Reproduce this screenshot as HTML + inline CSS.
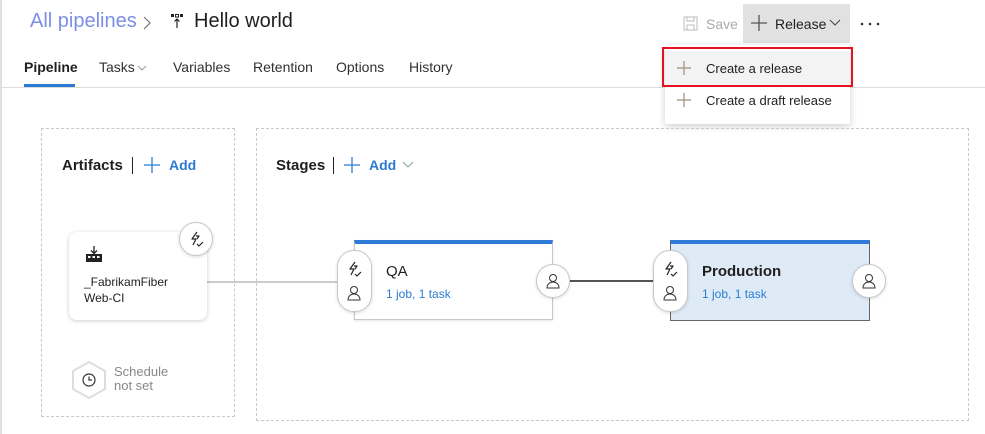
<!DOCTYPE html>
<html><head><meta charset="utf-8"><style>
*{box-sizing:border-box;margin:0;padding:0}
body{width:985px;height:434px;background:#fff;font-family:"Liberation Sans",sans-serif;position:relative;overflow:hidden;color:#201f1e}
.a{position:absolute}
.tab{position:absolute;top:59px;font-size:14px;color:#323130}
.circ{position:absolute;width:34px;height:34px;border-radius:50%;background:#fff;border:1px solid #c8c8c8;box-shadow:0 1px 3px rgba(0,0,0,.15);display:flex;align-items:center;justify-content:center}
.pill{position:absolute;width:35px;height:62px;border-radius:17px;background:#fff;border:1px solid #c8c8c8;box-shadow:0 1px 3px rgba(0,0,0,.15)}
</style></head><body>
<svg width="0" height="0" style="position:absolute"><defs>
<symbol id="bolt" viewBox="0 0 16 16"><path d="M9 1L4 8h4l-3 6M9 8l2-3h-3M9 13l2 2 4-4" fill="none" stroke="#222" stroke-width="1.2" stroke-linejoin="round"/></symbol>
<symbol id="user" viewBox="0 0 14 16"><circle cx="7" cy="5" r="3.5" fill="none" stroke="#333"/><path d="M1 15c0-4 3-6 6-6s6 2 6 6z" fill="none" stroke="#333"/></symbol>
</defs></svg>
<div class="a" style="left:0;top:0;width:2px;height:434px;background:#e0e0e0"></div>
<div class="a" style="left:30px;top:10px;font-size:20px;color:#7a8fe6">All pipelines</div>
<svg class="a" style="left:143px;top:16px" width="8" height="14"><path d="M1 1l6 6-6 6" stroke="#777" fill="none" stroke-width="1.2"/></svg>
<svg class="a" style="left:170px;top:13px" width="16" height="16" viewBox="0 0 16 16"><rect x="1" y="1" width="3" height="3" fill="#222"/><rect x="5.5" y="1.5" width="3" height="2.5" fill="none" stroke="#222"/><rect x="10" y="1" width="3" height="3" fill="#222"/><path d="M7 15V6M4.5 8.5L7 6l2.5 2.5" stroke="#222" fill="none" stroke-width="1.2"/></svg>
<div class="a" style="left:194px;top:10px;font-size:20px;color:#201f1e">Hello world</div>
<div class="tab" style="left:24px;font-weight:bold;color:#201f1e">Pipeline</div>
<div class="a" style="left:24px;top:84px;width:51px;height:3px;background:#2b7bd3"></div>
<div class="tab" style="left:99px">Tasks</div>
<svg class="a" style="left:137px;top:65px" width="10" height="6"><path d="M1 1l4 4 4-4" stroke="#999" fill="none"/></svg>
<div class="tab" style="left:173px">Variables</div>
<div class="tab" style="left:253px">Retention</div>
<div class="tab" style="left:336px">Options</div>
<div class="tab" style="left:409px">History</div>
<div class="a" style="left:0;top:87px;width:985px;height:1px;background:#ddd"></div>
<svg class="a" style="left:683px;top:16px" width="15" height="15" viewBox="0 0 15 15"><rect x="1" y="1" width="13" height="13" fill="none" stroke="#bbb"/><rect x="4" y="1" width="7" height="4" fill="none" stroke="#bbb"/><rect x="4" y="9" width="7" height="5" fill="none" stroke="#bbb"/></svg>
<div class="a" style="left:706px;top:16px;font-size:14px;color:#aaa">Save</div>
<div class="a" style="left:743px;top:4px;width:107px;height:39px;background:#e1e1e1"></div>
<svg class="a" style="left:751px;top:15px" width="16" height="16"><path d="M8 0v16M0 8h16" stroke="#555" stroke-width="1.3"/></svg>
<div class="a" style="left:775px;top:16px;font-size:14px;color:#201f1e">Release</div>
<svg class="a" style="left:829px;top:19px" width="12" height="8"><path d="M1 1l5 5 5-5" stroke="#444" fill="none"/></svg>
<svg class="a" style="left:860px;top:22px" width="20" height="4"><circle cx="2" cy="2" r="1.3" fill="#333"/><circle cx="10" cy="2" r="1.3" fill="#333"/><circle cx="18" cy="2" r="1.3" fill="#333"/></svg>
<div class="a" style="left:665px;top:45px;width:185px;height:79px;background:#fff;box-shadow:0 2px 8px rgba(0,0,0,.2);border-radius:2px"></div>
<div class="a" style="left:665px;top:51px;width:185px;height:34px;background:#f3f3f3"></div>
<div class="a" style="left:662px;top:47px;width:191px;height:40px;border:2px solid #e81123"></div>
<svg class="a" style="left:677px;top:61px" width="14" height="14"><path d="M7 0v14M0 7h14" stroke="#9c8f80" stroke-width="1.2"/></svg>
<div class="a" style="left:706px;top:61px;font-size:13px;color:#201f1e">Create a release</div>
<svg class="a" style="left:677px;top:93px" width="14" height="14"><path d="M7 0v14M0 7h14" stroke="#9c8f80" stroke-width="1.2"/></svg>
<div class="a" style="left:706px;top:93px;font-size:13px;color:#201f1e">Create a draft release</div>
<div class="a" style="left:41px;top:128px;width:194px;height:289px;border:1px dashed #c8c8c8"></div>
<div class="a" style="left:256px;top:128px;width:713px;height:293px;border:1px dashed #c8c8c8"></div>
<div class="a" style="left:62px;top:157px;font-size:15px;font-weight:bold">Artifacts</div>
<div class="a" style="left:132px;top:157px;width:1px;height:17px;background:#222"></div>
<svg class="a" style="left:144px;top:157px" width="16" height="16"><path d="M8 0v16M0 8h16" stroke="#2b7bd3" stroke-width="1.3"/></svg>
<div class="a" style="left:169px;top:157px;font-size:14px;font-weight:bold;color:#2b7bd3">Add</div>
<div class="a" style="left:276px;top:157px;font-size:15px;font-weight:bold">Stages</div>
<div class="a" style="left:333px;top:157px;width:1px;height:17px;background:#222"></div>
<svg class="a" style="left:344px;top:157px" width="16" height="16"><path d="M8 0v16M0 8h16" stroke="#2b7bd3" stroke-width="1.3"/></svg>
<div class="a" style="left:369px;top:157px;font-size:14px;font-weight:bold;color:#2b7bd3">Add</div>
<svg class="a" style="left:402px;top:161px" width="12" height="8"><path d="M1 1l5 5 5-5" stroke="#8aa" fill="none"/></svg>
<div class="a" style="left:207px;top:281px;width:132px;height:2px;background:#ccc"></div>
<div class="a" style="left:570px;top:280px;width:85px;height:2px;background:#555"></div>
<div class="a" style="left:69px;top:232px;width:138px;height:88px;background:#fff;border-radius:8px;box-shadow:0 1px 4px rgba(0,0,0,.2)"></div>
<svg class="a" style="left:85px;top:246px" width="18" height="16" viewBox="0 0 18 16"><path d="M9 0v7M6 4.5L9 7.5l3-3" stroke="#222" fill="none" stroke-width="1.3"/><path d="M1 8h16v8H1z" fill="#222"/><rect x="3" y="10" width="2.5" height="2" fill="#fff"/><rect x="7.5" y="10" width="2.5" height="2" fill="#fff"/><rect x="12" y="10" width="2.5" height="2" fill="#fff"/></svg>
<div class="a" style="left:84px;top:274px;font-size:12px;line-height:16px;color:#201f1e">_FabrikamFiber<br>Web-CI</div>
<div class="circ" style="left:179px;top:222px"><svg width="16" height="16"><use href="#bolt"/></svg></div>
<svg class="a" style="left:71px;top:361px" width="36" height="38" viewBox="0 0 36 38"><path d="M18 1L34 10v18L18 37 2 28V10z" fill="#fff" stroke="#ddd" stroke-width="2"/><circle cx="18" cy="19" r="6" fill="none" stroke="#333" stroke-width="1.2"/><path d="M18 15.5V19h3" stroke="#333" fill="none" stroke-width="1.2"/></svg>
<div class="a" style="left:114px;top:365px;font-size:13px;line-height:14px;color:#8a8886">Schedule<br>not set</div>
<div class="a" style="left:354px;top:240px;width:199px;height:80px;background:#fff;border:1px solid #c8c8c8;border-top:4px solid #2f7ad6;box-shadow:0 1px 2px rgba(0,0,0,.1)"></div>
<div class="a" style="left:386px;top:263px;font-size:15px">QA</div>
<div class="a" style="left:386px;top:287px;font-size:12px;color:#2b7bd3">1 job, 1 task</div>
<div class="pill" style="left:337px;top:250px"></div>
<svg class="a" style="left:346px;top:261px" width="16" height="16"><use href="#bolt"/></svg>
<svg class="a" style="left:347px;top:285px" width="14" height="16"><use href="#user"/></svg>
<div class="circ" style="left:536px;top:264px"><svg width="14" height="16"><use href="#user"/></svg></div>
<div class="a" style="left:670px;top:240px;width:200px;height:81px;background:#deebf7;border:1px solid #666;border-top:4px solid #2f7ad6"></div>
<div class="a" style="left:702px;top:263px;font-size:15px;font-weight:bold">Production</div>
<div class="a" style="left:702px;top:287px;font-size:12px;color:#2b7bd3">1 job, 1 task</div>
<div class="pill" style="left:653px;top:250px"></div>
<svg class="a" style="left:662px;top:261px" width="16" height="16"><use href="#bolt"/></svg>
<svg class="a" style="left:663px;top:285px" width="14" height="16"><use href="#user"/></svg>
<div class="circ" style="left:852px;top:264px"><svg width="14" height="16"><use href="#user"/></svg></div>
</body></html>
